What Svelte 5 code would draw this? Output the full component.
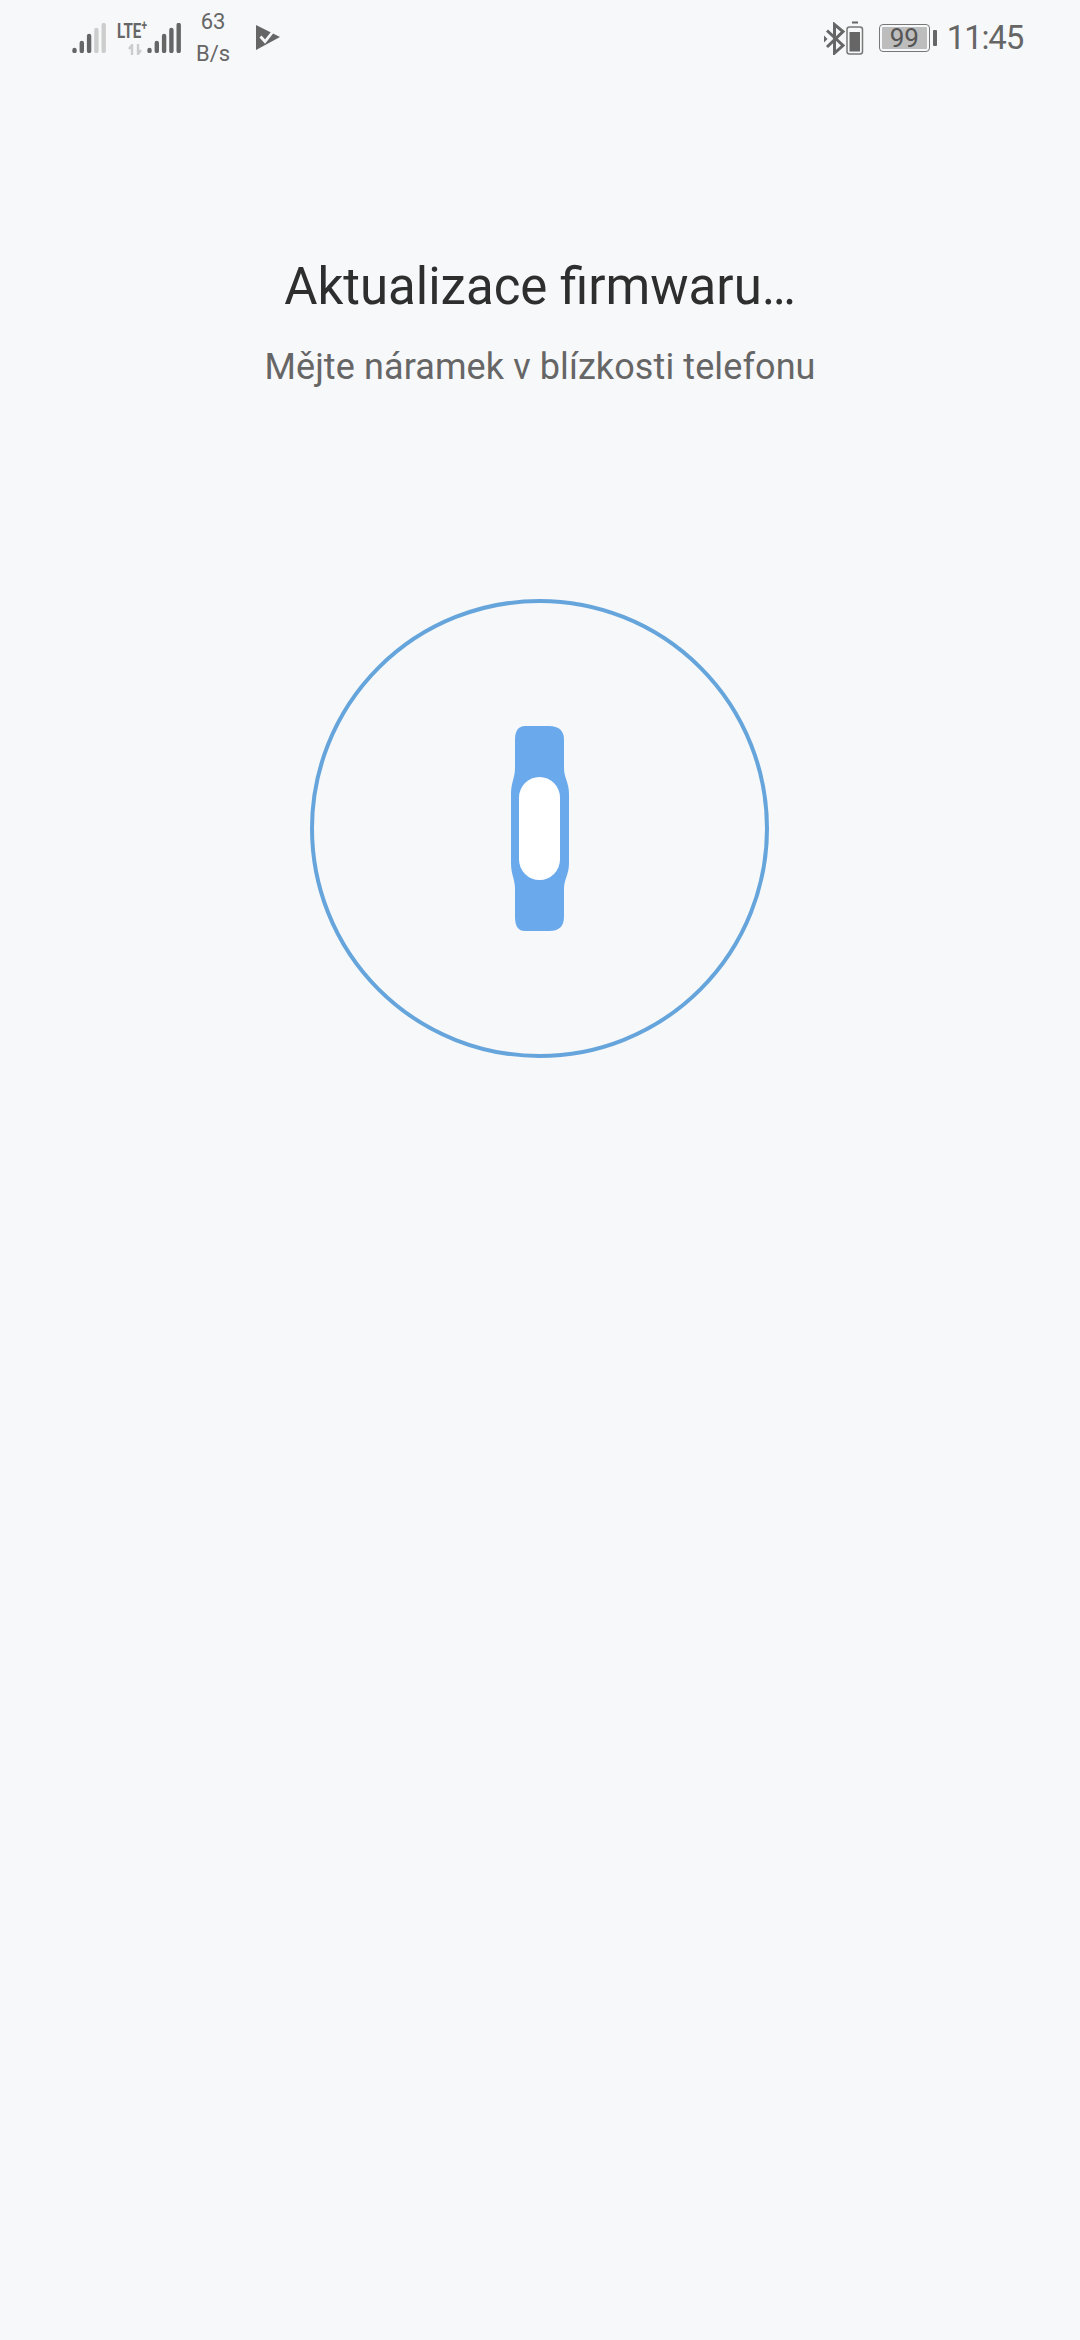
<script lang="ts">
  const title = 'Aktualizace firmwaru…';
  const subtitle = 'Mějte náramek v blízkosti telefonu';
  const bars = [
    { x: 2.5, top: 25 },
    { x: 9.8, top: 18 },
    { x: 17.1, top: 11 },
    { x: 24.4, top: 5 },
    { x: 31.7, top: 0 },
  ];
</script>

<div class="screen">
  <header class="status-bar">
    <div class="status-left">
      <svg class="signal-a" width="34" height="30" viewBox="0 0 34 30">
        {#each bars as bar, i}
          <line x1={bar.x} x2={bar.x} y1={bar.top + 2} y2="28" stroke={i < 3 ? '#666' : '#cdcdcd'} stroke-width="4.4" stroke-linecap="round" />
        {/each}
      </svg>
      <div class="sim2">
        <span class="lte">LTE<sup>+</sup></span>
        <svg class="arrows" width="14" height="11" viewBox="0 0 14 11">
          <path d="M4 11V1L1 5M10 0v10l3-4" stroke="#ccc" stroke-width="2.400" fill="none" />
        </svg>
        <svg class="signal-b" width="34" height="30" viewBox="0 0 34 30">
          {#each bars as bar}
            <line x1={bar.x} x2={bar.x} y1={bar.top + 2} y2="28" stroke="#666" stroke-width="4.4" stroke-linecap="round" />
          {/each}
        </svg>
      </div>
      <div class="speed"><span>63</span><span>B/s</span></div>
      <svg class="play" width="26" height="28" viewBox="0 0 26 28">
        <path d="M1 1 25 13 1 26Z" fill="#666" />
        <path d="M5.500 12.500l4.500 5L20 5" stroke="#f7f8f9" stroke-width="2.800" fill="none" />
      </svg>
    </div>
    <div class="status-right">
      <svg class="bt" width="22" height="33" viewBox="0 0 22 33">
        <path d="M3 8.500 19 23.500l-8.500 7.500V2.500l8.500 7L3 25" stroke="#666" stroke-width="3" fill="none" />
        <path d="M0 13.500l3.500 3.500L0 20.500Z" fill="#666" />
      </svg>
      <svg class="mini-batt" width="18" height="34" viewBox="0 0 18 34">
        <path d="M6 1.500h6" stroke="#666" stroke-width="2" />
        <rect x="1" y="6" width="15.500" height="27" rx="2.500" fill="none" stroke="#777" stroke-width="1.500" />
        <rect x="3.500" y="11" width="10.500" height="19.500" fill="#666" />
      </svg>
      <div class="battery">
        <div class="battery-body"><span>99</span></div>
        <div class="battery-cap"></div>
      </div>
      <span class="clock">11:45</span>
    </div>
  </header>

  <main class="content">
    <h1>{title}</h1>
    <p>{subtitle}</p>
    <div class="ring">
      <svg class="band" width="58" height="205" viewBox="0 0 58 205">
        <path d="M14 0H38Q53 0 53 14V42C53 52 58 56 58 68V137C58 149 53 153 53 163V191Q53 205 38 205H14Q4 205 4 191V163C4 153 0 149 0 137V68C0 56 4 52 4 42V14Q4 0 14 0Z" fill="#6aa9ec" />
        <rect x="8" y="51" width="41" height="103" rx="20.500" fill="#fff" />
      </svg>
    </div>
  </main>
</div>

<style>
  :global(body) {
    margin: 0;
    background: #f7f8f9;
  }

  .screen {
    height: 2340px;
    background: #f7f8f9;
    font-family: Roboto, "Liberation Sans", sans-serif;
    overflow: hidden;
  }

  .status-bar {
    display: flex;
    justify-content: space-between;
    align-items: center;
    height: 76px;
    padding: 0 57px 0 72px;
    color: #666;
  }

  .status-left,
  .status-right {
    display: flex;
    align-items: center;
  }

  .sim2 {
    position: relative;
    width: 62px;
    height: 34px;
    margin-left: 11px;
  }

  .lte {
    position: absolute;
    left: 0;
    top: -1px;
    font-size: 21px;
    font-weight: 700;
    line-height: 22px;
    transform: scaleX(0.72);
    transform-origin: left;
    white-space: nowrap;
  }

  .lte sup {
    font-size: 14px;
    line-height: 0;
  }

  .arrows {
    position: absolute;
    left: 11px;
    top: 23px;
  }

  .signal-b {
    position: absolute;
    right: -2px;
    top: 2px;
  }

  .speed {
    display: flex;
    flex-direction: column;
    align-items: center;
    width: 44px;
    margin-left: 12px;
    font-size: 22px;
    line-height: 32px;
  }

  .play {
    margin-left: 20px;
  }

  .battery {
    display: flex;
    align-items: center;
    margin-left: 15px;
  }

  .battery-body {
    display: flex;
    align-items: center;
    justify-content: center;
    box-sizing: border-box;
    width: 51px;
    height: 28px;
    border: 1.500px solid #777;
    border-radius: 4px;
    padding: 2px;
    background: #bdbdbd content-box;
    color: #555;
    font-size: 26px;
    line-height: 24px;
  }

  .battery-cap {
    width: 4px;
    height: 16px;
    margin-left: 3px;
    border-radius: 1px;
    background: #666;
  }

  .clock {
    margin-left: 10px;
    font-size: 33px;
    letter-spacing: -1.2px;
    line-height: 36px;
    color: #666;
  }

  .content {
    display: flex;
    flex-direction: column;
    align-items: center;
  }

  h1 {
    margin: 179px 0 0;
    font-size: 51px;
    font-weight: 400;
    line-height: 64px;
    color: #2e2e2e;
  }

  p {
    margin: 25px 0 0;
    font-size: 36px;
    letter-spacing: 0.1px;
    line-height: 46px;
    color: #666;
  }

  .ring {
    display: flex;
    align-items: center;
    justify-content: center;
    box-sizing: border-box;
    width: 459px;
    height: 459px;
    margin-top: 209px;
    margin-right: 1px;
    border: 4px solid #66a5dc;
    border-radius: 50%;
  }
</style>
